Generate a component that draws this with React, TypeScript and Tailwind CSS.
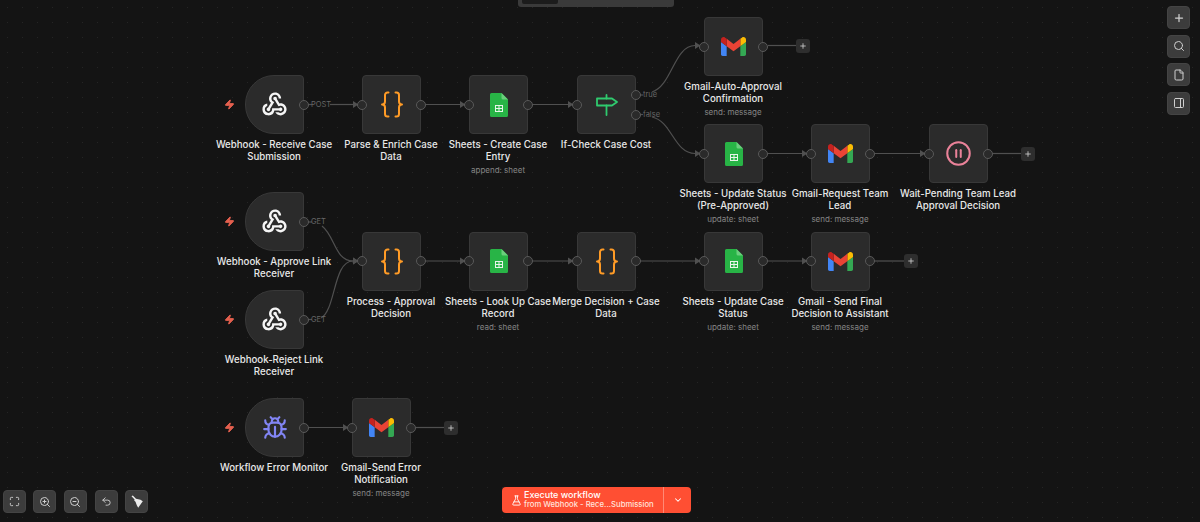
import { Bug, ChevronDown, CirclePause, FlaskConical, Maximize, Plus, Search, ZoomIn, ZoomOut, Undo2, Zap, File, PanelRight } from "lucide-react";
import { MdWebhook } from "react-icons/md";
import type { ReactNode } from "react";

const Gmail = () => (
  <svg width="25" height="19" viewBox="52 42 88 66">
    <path fill="#4285f4" d="M58 108h14V74L52 59v43c0 3.32 2.69 6 6 6" />
    <path fill="#34a853" d="M120 108h14c3.32 0 6-2.69 6-6V59l-20 15" />
    <path fill="#fbbc04" d="M120 48v26l20-15v-8c0-7.42-8.47-11.65-14.4-7.2" />
    <path fill="#ea4335" d="M72 74V48l24 18 24-18v26L96 92" />
    <path fill="#c5221f" d="M52 51v8l20 15V48l-5.6-4.2c-5.94-4.45-14.4-.22-14.4 7.2" />
  </svg>
);

const Sheets = () => (
  <svg width="18" height="24" viewBox="0 0 18 24">
    <path fill="#28b446" d="M1.5 0H11.5L18 6.5V22.5A1.5 1.5 0 0 1 16.500 24H1.500A1.500 1.500 0 0 1 0 22.500V1.500A1.500 1.500 0 0 1 1.500 0Z" />
    <path fill="#6ace7c" d="M11.500 0L18 6.500H13A1.500 1.500 0 0 1 11.500 5Z" />
    <path fill="#e8f5ea" d="M5 12H13V19H5ZM6 13V15H8.500V13ZM9.500 13V15H12V13ZM6 16V18H8.500V16ZM9.500 16V18H12V16Z" fillRule="evenodd" />
  </svg>
);

const Sign = () => (
  <svg width="22" height="22" viewBox="0 0 22 22" fill="none" stroke="#2fca6e" strokeWidth="1.800" strokeLinejoin="round" strokeLinecap="round">
    <path d="M1 4.500H16L21 8L16 11.500H1Z" />
    <path d="M10.500 1V4.500M10.500 11.500V21" />
  </svg>
);

const Broom = () => (
  <svg width="14" height="14" viewBox="0 0 14 14" fill="#ececec">
    <path d="M1.500 1.200L2.800 0.600L6 3.800L10.500 4.800L12.800 6.200L8.200 12.800L6.800 10.200L5.500 6.800L4.200 5.500L4.600 4.500Z" />
  </svg>
);

const Hook = () => <MdWebhook size={29} color="#f5f5f5" />;
const Code = () => (
  <svg width="24" height="27" viewBox="0 0 24 27" fill="none" stroke="#ff9b26" strokeWidth="2" strokeLinecap="round" strokeLinejoin="round">
    <path d="M8.500 1.500H7.500A2.500 2.500 0 0 0 5 4V10.500A3 3 0 0 1 2 13.500A3 3 0 0 1 5 16.500V23A2.500 2.500 0 0 0 7.500 25.500H8.500" />
    <path d="M15.500 1.500H16.500A2.500 2.500 0 0 1 19 4V10.500A3 3 0 0 0 22 13.500A3 3 0 0 0 19 16.500V23A2.500 2.500 0 0 1 16.500 25.500H15.500" />
  </svg>
);
const BugIcon = () => <Bug size={26} color="#8285f5" strokeWidth={2} />;
const Pause = () => <CirclePause size={27} color="#ea8299" strokeWidth={1.800} />;

type N = { x: number; y: number; lines: string[]; sub?: string; icon: ReactNode; trigger?: boolean; noOut?: boolean };

const nodes: N[] = [
  { x: 245, y: 75, lines: ["Webhook - Receive Case", "Submission"], icon: <Hook />, trigger: true },
  { x: 362, y: 75, lines: ["Parse & Enrich Case", "Data"], icon: <Code /> },
  { x: 469, y: 75, lines: ["Sheets - Create Case", "Entry"], sub: "append: sheet", icon: <Sheets /> },
  { x: 577, y: 75, lines: ["If-Check Case Cost"], icon: <Sign />, noOut: true },
  { x: 704, y: 17, lines: ["Gmail-Auto-Approval", "Confirmation"], sub: "send: message", icon: <Gmail /> },
  { x: 704, y: 124, lines: ["Sheets - Update Status", "(Pre-Approved)"], sub: "update: sheet", icon: <Sheets /> },
  { x: 811, y: 124, lines: ["Gmail-Request Team", "Lead"], sub: "send: message", icon: <Gmail /> },
  { x: 929, y: 124, lines: ["Wait-Pending Team Lead", "Approval Decision"], icon: <Pause /> },
  { x: 245, y: 192, lines: ["Webhook - Approve Link", "Receiver"], icon: <Hook />, trigger: true },
  { x: 245, y: 290, lines: ["Webhook-Reject Link", "Receiver"], icon: <Hook />, trigger: true },
  { x: 362, y: 231.5, lines: ["Process - Approval", "Decision"], icon: <Code /> },
  { x: 469, y: 231.5, lines: ["Sheets - Look Up Case", "Record"], sub: "read: sheet", icon: <Sheets /> },
  { x: 577, y: 231.5, lines: ["Merge Decision + Case", "Data"], icon: <Code /> },
  { x: 704, y: 231.5, lines: ["Sheets - Update Case", "Status"], sub: "update: sheet", icon: <Sheets /> },
  { x: 811, y: 231.5, lines: ["Gmail - Send Final", "Decision to Assistant"], sub: "send: message", icon: <Gmail /> },
  { x: 245, y: 398, lines: ["Workflow Error Monitor"], icon: <BugIcon />, trigger: true },
  { x: 352, y: 398, lines: ["Gmail-Send Error", "Notification"], sub: "send: message", icon: <Gmail /> },
];

const straight: [number, number, number][] = [
  [330, 353, 104.5],
  [426, 460, 104.5],
  [533, 568, 104.5],
  [768, 802, 153.5],
  [875, 920, 153.5],
  [426, 460, 261],
  [533, 568, 261],
  [640, 695, 261],
  [768, 802, 261],
  [308, 343, 427.500],
];
const stubs: [number, number, number][] = [
  [768, 797, 45.500],
  [993, 1021, 153.500],
  [875, 904, 261],
  [416, 445, 427.500],
  [308, 312, 104.500],
  [308, 312, 222],
  [308, 312, 319.500],
  [640, 643, 95],
  [640, 643, 114.500],
];
const curves: [string, number, number][] = [
  ["M652 92C672 86 674 45.500 695 45.500", 695, 45.500],
  ["M652 117C672 121 674 153.500 695 153.500", 695, 153.500],
  ["M322 226C335 236 335 261 353 261", 353, 261],
  ["M321 318C336 310 333 261 353 261", 353, 261],
];
const edgeLabels: [string, number, number][] = [
  ["POST", 311, 104.500],
  ["GET", 311, 222],
  ["GET", 311, 319.500],
  ["true", 643, 95],
  ["false", 643, 114.500],
];
const plusButtons: [number, number][] = [
  [796, 38.500],
  [1021, 146.500],
  [904, 253.500],
  [444, 420.500],
];

const Arrow = ({ x, y }: { x: number; y: number }) => <path d={`M${x} ${y - 3.500}L${x + 5.500} ${y}L${x} ${y + 3.500}Z`} fill="#505050" stroke="none" />;

function Port({ side }: { side: "in" | "out" }) {
  return (
    <span
      className={
        side === "in"
          ? "absolute left-[-5px] top-[24.500px] h-[10px] w-[10px] rounded-full border border-[#595959] bg-[#2a2a2a]"
          : "absolute right-[-5px] top-[24.500px] h-[10px] w-[10px] rounded-full border border-[#595959] bg-[#2a2a2a]"
      }
    />
  );
}

function Node({ n }: { n: N }) {
  return (
    <div className="absolute h-[59px] w-[59px]" style={{ left: n.x, top: n.y }}>
      <div
        className={
          n.trigger
            ? "flex h-full w-full items-center justify-center rounded-l-[29px] rounded-r-[4px] border border-[#383838] bg-[#2b2b2b]"
            : "flex h-full w-full items-center justify-center rounded-[4px] border border-[#383838] bg-[#2b2b2b]"
        }
      >
        {n.icon}
      </div>
      {!n.trigger && <Port side="in" />}
      {!n.noOut && <Port side="out" />}
      {n.trigger && <Zap size={11} className="absolute left-[-21px] top-[24px] fill-[#e5604f] text-[#e5604f]" />}
      <div className="absolute left-[-60.500px] top-[64px] w-[179px] text-center">
        {n.lines.map((l) => (
          <div key={l} className="whitespace-nowrap text-[9.700px] font-medium leading-[12px] text-[#e8e8e8]">
            {l}
          </div>
        ))}
        {n.sub && <div className="mt-[1px] whitespace-nowrap text-[8px] leading-[12px] text-[#858585]">{n.sub}</div>}
      </div>
    </div>
  );
}

function ToolButton({ children }: { children: ReactNode }) {
  return (
    <div className="flex h-[23px] w-[23px] items-center justify-center rounded-[4px] border border-[#444444] bg-[#3c3c3c] text-[#cfcfcf]">
      {children}
    </div>
  );
}

export default function App() {
  return (
    <div
      className="relative h-[522px] w-[1200px] overflow-hidden bg-[#141414] bg-[radial-gradient(#252525_0.6px,transparent_0.7px)] bg-[size:15px_15px]"
      style={{ fontFamily: "Inter, 'Liberation Sans', sans-serif" }}
    >
      <div className="absolute left-[518px] top-0 h-[7px] w-[156px] rounded-b-[3px] bg-[#3a3a3a] pl-[4px]">
        <div className="h-[4px] w-[36px] rounded-b-[2px] bg-[#1c1c1c]" />
      </div>

      <svg className="absolute left-0 top-0" width="1200" height="522" fill="none" stroke="#505050" strokeWidth="1.200">
        {straight.map(([a, b, y]) => (
          <g key={`${a}-${y}`}>
            <path d={`M${a} ${y}H${b}`} />
            <Arrow x={b} y={y} />
          </g>
        ))}
        {stubs.map(([a, b, y]) => (
          <path key={`${a}-${y}`} d={`M${a} ${y}H${b}`} />
        ))}
        {curves.map(([d, x, y]) => (
          <g key={d}>
            <path d={d} />
            <Arrow x={x} y={y} />
          </g>
        ))}
      </svg>

      {nodes.map((n) => (
        <Node key={n.lines.join()} n={n} />
      ))}

      <span className="absolute left-[631px] top-[90px] h-[10px] w-[10px] rounded-full border border-[#595959] bg-[#2a2a2a]" />
      <span className="absolute left-[631px] top-[109.500px] h-[10px] w-[10px] rounded-full border border-[#595959] bg-[#2a2a2a]" />

      {edgeLabels.map(([t, x, y]) => (
        <span
          key={`${t}-${y}`}
          className="absolute -translate-y-1/2 text-[7.500px] leading-[10px] text-[#666666]"
          style={{ left: x, top: y }}
        >
          {t}
        </span>
      ))}

      {plusButtons.map(([x, y]) => (
        <div
          key={x}
          className="absolute flex h-[14px] w-[14px] items-center justify-center rounded-[3px] bg-[#2e2e2e] text-[#d0d0d0]"
          style={{ left: x, top: y }}
        >
          <Plus size={8} strokeWidth={2.500} />
        </div>
      ))}

      <div className="absolute left-[1167px] top-[6px] flex flex-col gap-[5.500px]">
        <ToolButton><Plus size={12} strokeWidth={2.500} /></ToolButton>
        <ToolButton><Search size={12} strokeWidth={2} /></ToolButton>
        <ToolButton><File size={12} strokeWidth={2} /></ToolButton>
        <ToolButton><PanelRight size={12} strokeWidth={2} /></ToolButton>
      </div>

      <div className="absolute left-[2.500px] top-[490px] flex gap-[7.700px]">
        <ToolButton><Maximize size={11} strokeWidth={2} /></ToolButton>
        <ToolButton><ZoomIn size={12} strokeWidth={2} /></ToolButton>
        <ToolButton><ZoomOut size={12} strokeWidth={2} /></ToolButton>
        <ToolButton><Undo2 size={11} strokeWidth={2} /></ToolButton>
        <ToolButton><Broom /></ToolButton>
      </div>

      <div className="absolute left-[502px] top-[487px] flex h-[26px] w-[189px] items-center rounded-[4px] bg-[#ff4f33] text-white">
        <div className="flex h-full w-[161px] items-center gap-[2px] pl-[9px]">
          <FlaskConical size={11} strokeWidth={2} />
          <div className="-mt-[1px] whitespace-nowrap">
            <div className="text-[9px] font-medium leading-[11px]">Execute workflow</div>
            <div className="text-[7.700px] font-medium leading-[10px] text-[#ffe3dc]">from Webhook - Rece...Submission</div>
          </div>
        </div>
        <div className="flex h-full flex-1 items-center justify-center border-l border-[#ff8a76]">
          <ChevronDown size={10} strokeWidth={2.500} />
        </div>
      </div>
    </div>
  );
}
